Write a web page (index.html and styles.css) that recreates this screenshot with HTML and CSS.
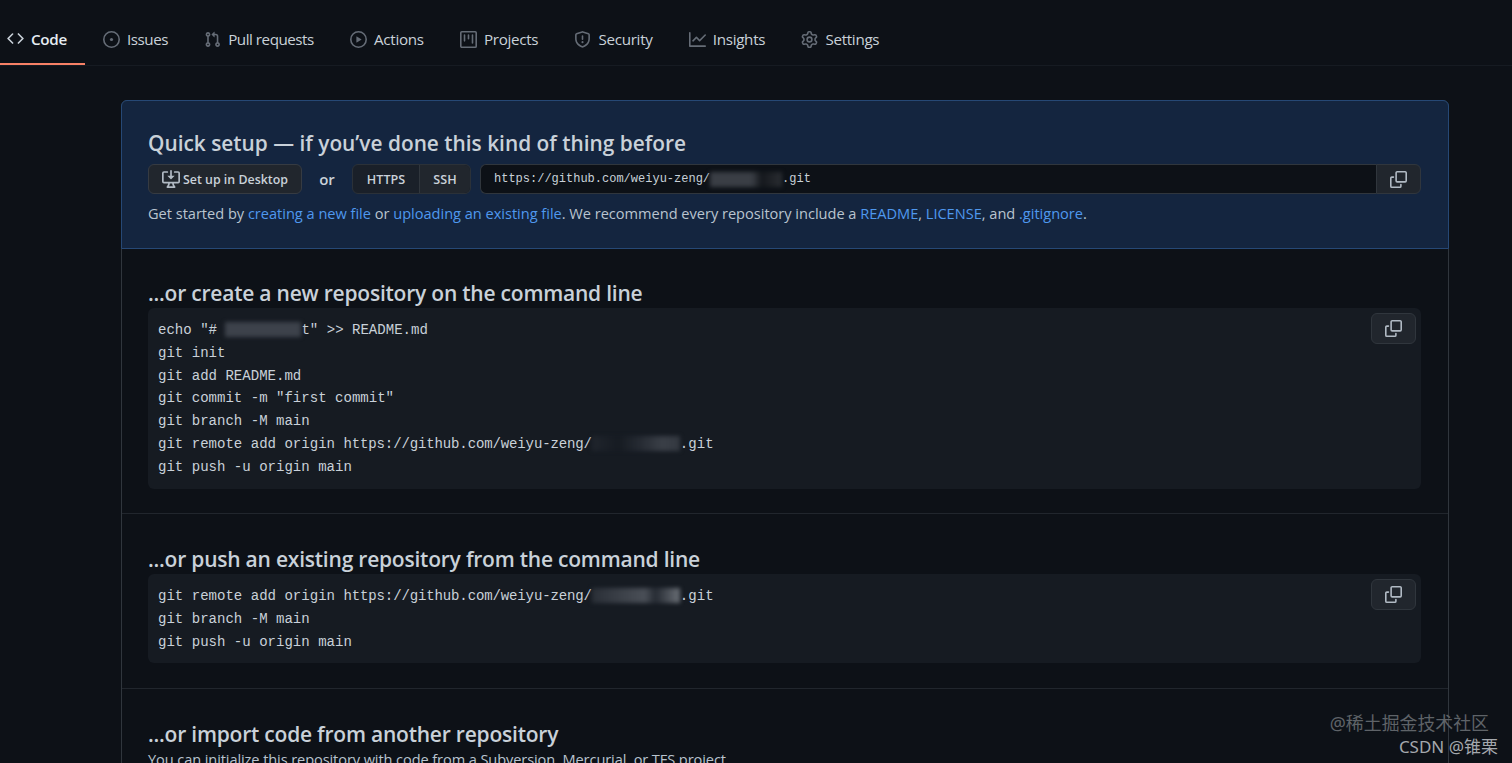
FILE: index.html
```html
<!DOCTYPE html>
<html lang="en">
<head>
<meta charset="utf-8">
<title>Quick setup</title>
<link rel="stylesheet" href="styles.css">
</head>
<body>
<svg class="defs" aria-hidden="true">
<symbol id="i-code" viewBox="0 0 16 16"><path d="M4.72 3.22a.75.75 0 011.06 1.06L2.06 8l3.72 3.72a.75.75 0 11-1.06 1.06L.47 8.53a.75.75 0 010-1.06l4.25-4.25zm6.56 0a.75.75 0 10-1.06 1.06L13.94 8l-3.72 3.72a.75.75 0 101.06 1.06l4.25-4.25a.75.75 0 000-1.06l-4.25-4.25z"/></symbol>
<symbol id="i-issue" viewBox="0 0 16 16"><path d="M8 9.5a1.5 1.5 0 100-3 1.5 1.5 0 000 3z"/><path fill-rule="evenodd" d="M8 0a8 8 0 100 16A8 8 0 008 0zM1.5 8a6.5 6.5 0 1113 0 6.5 6.5 0 01-13 0z"/></symbol>
<symbol id="i-pr" viewBox="0 0 16 16"><path fill-rule="evenodd" d="M7.177 3.073L9.573.677A.25.25 0 0110 .854v4.792a.25.25 0 01-.427.177L7.177 3.427a.25.25 0 010-.354zM3.75 2.5a.75.75 0 100 1.5.75.75 0 000-1.5zm-2.25.75a2.25 2.25 0 113 2.122v5.256a2.251 2.251 0 11-1.5 0V5.372A2.25 2.25 0 011.5 3.25zM11 2.5h-1V4h1a1 1 0 011 1v5.628a2.251 2.251 0 101.5 0V5A2.5 2.5 0 0011 2.5zm1 10.25a.75.75 0 111.5 0 .75.75 0 01-1.5 0zM3.75 12a.75.75 0 100 1.5.75.75 0 000-1.5z"/></symbol>
<symbol id="i-play" viewBox="0 0 16 16"><path fill-rule="evenodd" d="M1.5 8a6.5 6.5 0 1113 0 6.5 6.5 0 01-13 0zM8 0a8 8 0 100 16A8 8 0 008 0zM6.379 5.227A.25.25 0 006 5.442v5.117a.25.25 0 00.379.214l4.264-2.559a.25.25 0 000-.428L6.379 5.227z"/></symbol>
<symbol id="i-project" viewBox="0 0 16 16"><path fill-rule="evenodd" d="M1.75 0A1.75 1.75 0 000 1.75v12.5C0 15.216.784 16 1.75 16h12.5A1.75 1.75 0 0016 14.25V1.75A1.75 1.75 0 0014.25 0H1.75zM1.5 1.75a.25.25 0 01.25-.25h12.5a.25.25 0 01.25.25v12.5a.25.25 0 01-.25.25H1.75a.25.25 0 01-.25-.25V1.75zM11.75 3a.75.75 0 00-.75.75v7.5a.75.75 0 001.5 0v-7.5a.75.75 0 00-.75-.75zm-8.25.75a.75.75 0 011.5 0v5.5a.75.75 0 01-1.5 0v-5.5zM8 3a.75.75 0 00-.75.75v3.5a.75.75 0 001.5 0v-3.5A.75.75 0 008 3z"/></symbol>
<symbol id="i-shield" viewBox="0 0 16 16"><path fill-rule="evenodd" d="M7.467.133a1.75 1.75 0 011.066 0l5.25 1.68A1.75 1.75 0 0115 3.48V7c0 1.566-.32 3.182-1.303 4.682-.983 1.498-2.585 2.813-5.032 3.855a1.7 1.7 0 01-1.33 0c-2.447-1.042-4.049-2.357-5.032-3.855C1.32 10.182 1 8.566 1 7V3.48a1.75 1.75 0 011.217-1.667l5.25-1.68zm.61 1.429a.25.25 0 00-.153 0l-5.25 1.68a.25.25 0 00-.174.238V7c0 1.358.275 2.666 1.057 3.86.784 1.194 2.121 2.34 4.366 3.297a.2.2 0 00.154 0c2.245-.956 3.582-2.104 4.366-3.298C13.225 9.666 13.5 8.36 13.5 7V3.48a.25.25 0 00-.174-.237l-5.25-1.68zM9 10.5a1 1 0 11-2 0 1 1 0 012 0zm-.25-5.75a.75.75 0 10-1.5 0v3a.75.75 0 001.5 0v-3z"/></symbol>
<symbol id="i-graph" viewBox="0 0 16 16"><path fill-rule="evenodd" d="M1.5 1.75a.75.75 0 00-1.5 0v12.5c0 .414.336.75.75.75h14.5a.75.75 0 000-1.5H1.5V1.75zm14.28 2.53a.75.75 0 00-1.06-1.06L10 7.94 7.53 5.47a.75.75 0 00-1.06 0L3.22 8.72a.75.75 0 001.06 1.06L7 7.06l2.47 2.47a.75.75 0 001.06 0l5.25-5.25z"/></symbol>
<symbol id="i-gear" viewBox="0 0 16 16"><path fill-rule="evenodd" d="M7.429 1.525a6.593 6.593 0 011.142 0c.036.003.108.036.137.146l.289 1.105c.147.56.55.967.997 1.189.174.086.341.183.501.29.417.278.97.423 1.53.27l1.102-.303c.11-.03.175.016.195.046.219.31.41.641.573.989.014.031.022.11-.059.19l-.815.806c-.411.406-.562.957-.53 1.456a4.588 4.588 0 010 .582c-.032.499.119 1.05.53 1.456l.815.806c.08.08.073.159.059.19a6.494 6.494 0 01-.573.99c-.02.029-.086.074-.195.045l-1.103-.303c-.559-.153-1.112-.008-1.529.27-.16.107-.327.204-.5.29-.449.222-.851.628-.998 1.189l-.289 1.105c-.029.11-.101.143-.137.146a6.613 6.613 0 01-1.142 0c-.036-.003-.108-.037-.137-.146l-.289-1.105c-.147-.56-.55-.967-.997-1.189a4.502 4.502 0 01-.501-.29c-.417-.278-.97-.423-1.53-.27l-1.102.303c-.11.03-.175-.016-.195-.046a6.492 6.492 0 01-.573-.989c-.014-.031-.022-.11.059-.19l.815-.806c.411-.406.562-.957.53-1.456a4.587 4.587 0 010-.582c.032-.499-.119-1.05-.53-1.456l-.815-.806c-.08-.08-.073-.159-.059-.19a6.44 6.44 0 01.573-.99c.02-.029.086-.075.195-.045l1.103.303c.559.153 1.112.008 1.529-.27.16-.107.327-.204.5-.29.449-.222.851-.628.998-1.189l.289-1.105c.029-.11.101-.143.137-.146zM8 0c-.236 0-.47.01-.701.03-.743.065-1.29.615-1.458 1.261l-.29 1.106c-.017.066-.078.158-.211.224a5.994 5.994 0 00-.668.386c-.123.082-.233.09-.3.071L3.27 2.776c-.644-.177-1.392.02-1.82.63a7.977 7.977 0 00-.704 1.217c-.315.675-.111 1.422.363 1.891l.815.806c.05.048.098.147.088.294a6.084 6.084 0 000 .772c.01.147-.038.246-.088.294l-.815.806c-.474.469-.678 1.216-.363 1.891.2.428.436.835.704 1.218.428.609 1.176.806 1.82.63l1.103-.303c.066-.019.176-.011.299.071.213.143.436.272.668.386.133.066.194.158.212.224l.289 1.106c.169.646.715 1.196 1.458 1.26a8.094 8.094 0 001.402 0c.743-.064 1.29-.614 1.458-1.26l.29-1.106c.017-.066.078-.158.211-.224a5.98 5.98 0 00.668-.386c.123-.082.233-.09.3-.071l1.102.302c.644.177 1.392-.02 1.82-.63.268-.382.505-.789.704-1.217.315-.675.111-1.422-.364-1.891l-.814-.806c-.05-.048-.098-.147-.088-.294a6.1 6.1 0 000-.772c-.01-.147.039-.246.088-.294l.814-.806c.475-.469.679-1.216.364-1.891a7.992 7.992 0 00-.704-1.218c-.428-.609-1.176-.806-1.82-.63l-1.103.303c-.066.019-.176.011-.299-.071a5.991 5.991 0 00-.668-.386c-.133-.066-.194-.158-.212-.224L10.16 1.29C9.99.645 9.444.095 8.701.031A8.094 8.094 0 008 0zm1.5 8a1.5 1.5 0 11-3 0 1.5 1.5 0 013 0zM11 8a3 3 0 11-6 0 3 3 0 016 0z"/></symbol>
<symbol id="i-copy" viewBox="0 0 16 16"><path d="M0 6.75C0 5.784.784 5 1.75 5h1.5a.75.75 0 010 1.5h-1.5a.25.25 0 00-.25.25v7.5c0 .138.112.25.25.25h7.5a.25.25 0 00.25-.25v-1.5a.75.75 0 011.5 0v1.5A1.75 1.75 0 019.25 16h-7.5A1.75 1.75 0 010 14.25v-7.5z"/><path fill-rule="evenodd" d="M5 1.75C5 .784 5.784 0 6.75 0h7.5C15.216 0 16 .784 16 1.75v7.5A1.75 1.75 0 0114.25 11h-7.5A1.75 1.75 0 015 9.25v-7.5zm1.75-.25a.25.25 0 00-.25.25v7.5c0 .138.112.25.25.25h7.5a.25.25 0 00.25-.25v-7.5a.25.25 0 00-.25-.25h-7.5z"/></symbol>
<symbol id="i-desktop" viewBox="0 0 16 16"><path d="M4.927 5.427l2.896 2.896a.25.25 0 00.354 0l2.896-2.896A.25.25 0 0010.896 5H8.75V.75a.75.75 0 10-1.5 0V5H5.104a.25.25 0 00-.177.427z"/><path fill-rule="evenodd" d="M1.573 2.573a.25.25 0 00-.073.177v7.5a.25.25 0 00.25.25h12.5a.25.25 0 00.25-.25v-7.5a.25.25 0 00-.25-.25h-3a.75.75 0 110-1.5h3A1.75 1.75 0 0116 2.75v7.5A1.75 1.75 0 0114.25 12h-3.727c.099 1.041.52 1.872 1.292 2.757A.75.75 0 0111.25 16h-6.5a.75.75 0 01-.565-1.243c.772-.885 1.192-1.716 1.292-2.757H1.75A1.75 1.75 0 010 10.25v-7.5A1.75 1.75 0 011.75 1h3a.75.75 0 010 1.5h-3a.25.25 0 00-.177.073zM6.982 12a5.72 5.72 0 01-.765 2.5h3.566a5.72 5.72 0 01-.765-2.5H6.982z"/></symbol>
</svg>

<nav class="tabs">
  <a class="tab tab-active"><svg class="tab-icon code-icon"><use href="#i-code"/></svg>Code</a>
  <a class="tab tab-tight"><svg class="tab-icon"><use href="#i-issue"/></svg>Issues</a>
  <a class="tab tab-tight"><svg class="tab-icon"><use href="#i-pr"/></svg>Pull requests</a>
  <a class="tab"><svg class="tab-icon"><use href="#i-play"/></svg>Actions</a>
  <a class="tab"><svg class="tab-icon"><use href="#i-project"/></svg>Projects</a>
  <a class="tab"><svg class="tab-icon"><use href="#i-shield"/></svg>Security</a>
  <a class="tab"><svg class="tab-icon"><use href="#i-graph"/></svg>Insights</a>
  <a class="tab"><svg class="tab-icon"><use href="#i-gear"/></svg>Settings</a>
</nav>

<main class="box">
  <section class="quick">
    <h3 class="heading quick-heading">Quick setup — if you’ve done this kind of thing before</h3>
    <div class="clone-row">
      <button class="btn desktop-btn"><svg class="desktop-icon"><use href="#i-desktop"/></svg>Set up in Desktop</button>
      <span class="or">or</span>
      <div class="proto">
        <span class="proto-item proto-https">HTTPS</span>
        <span class="proto-item proto-ssh">SSH</span>
      </div>
      <div class="url-group">
        <div class="url">https://github.com/weiyu-zeng/<span class="redact redact-url"></span>.git</div>
        <button class="url-copy"><svg class="copy-icon"><use href="#i-copy"/></svg></button>
      </div>
    </div>
    <p class="hint">Get started by <a>creating a new file</a> or <a>uploading an existing file</a>. We recommend every repository include a <a>README</a>, <a>LICENSE</a>, and <a>.gitignore</a>.</p>
  </section>

  <section class="block block-create">
    <h3 class="heading">...or create a new repository on the command line</h3>
    <div class="code">
      <button class="code-copy"><svg class="copy-icon"><use href="#i-copy"/></svg></button>
      <div class="code-line">echo "# <span class="redact redact-echo"></span>t" &gt;&gt; README.md</div>
      <div class="code-line">git init</div>
      <div class="code-line">git add README.md</div>
      <div class="code-line">git commit -m "first commit"</div>
      <div class="code-line">git branch -M main</div>
      <div class="code-line">git remote add origin <span class="repo-url">https://github.com/weiyu-zeng/</span><span class="redact redact-remote"></span>.git</div>
      <div class="code-line">git push -u origin main</div>
    </div>
  </section>

  <section class="block block-push">
    <h3 class="heading">...or push an existing repository from the command line</h3>
    <div class="code">
      <button class="code-copy"><svg class="copy-icon"><use href="#i-copy"/></svg></button>
      <div class="code-line">git remote add origin <span class="repo-url">https://github.com/weiyu-zeng/</span><span class="redact redact-push"></span>.git</div>
      <div class="code-line">git branch -M main</div>
      <div class="code-line">git push -u origin main</div>
    </div>
  </section>

  <section class="block block-import">
    <h3 class="heading">...or import code from another repository</h3>
    <p class="import-text">You can initialize this repository with code from a Subversion, Mercurial, or TFS project.</p>
  </section>
</main>

<div class="watermark">
  <div class="wm-site">@稀土掘金技术社区</div>
  <div class="wm-user">CSDN @锥栗</div>
</div>
</body>
</html>
```

FILE: styles.css
```css
* { box-sizing: border-box; }
html, body { height: 763px; overflow: hidden; }
body {
  margin: 0;
  background: #0d1117;
  color: #c9d1d9;
  font-family: "Open Sans", "Noto Sans", sans-serif;
  position: relative;
}
.defs { display: none; }
svg { fill: currentColor; flex: none; }

.tabs {
  display: flex;
  height: 66px;
  border-bottom: 1px solid #161b22;
  padding-top: 14px;
}
.tab {
  display: flex;
  align-items: center;
  height: 51px;
  padding: 0 18.1px 1px;
  font-size: 15.2px;
  letter-spacing: -0.3px;
  color: #c9d1d9;
  white-space: nowrap;
}
.tab-tight { letter-spacing: -0.48px; }
.tab-active {
  padding-left: 7px;
  padding-bottom: 0;
  font-weight: 600;
  color: #e6edf3;
  border-bottom: 2px solid #f78166;
}
.tab-icon {
  width: 17px;
  height: 17px;
  margin-right: 7px;
  color: #656c76;
}
.code-icon { color: #c9d1d9; }

.box {
  margin: 34px 63px 0 121px;
  border: 1px solid #30363d;
  border-radius: 6px;
}
.heading {
  margin: 0;
  font-size: 21px;
  line-height: 28px;
  font-weight: 600;
  letter-spacing: -0.22px;
  color: #c9d1d9;
}
.quick-heading { font-size: 20.85px; letter-spacing: 0; }
.quick {
  height: 149px;
  padding: 28px 27px 0 26px;
  background: #14253f;
  margin: -1px -1px 0;
  border: 1px solid #264875;
  border-radius: 6px 6px 0 0;
}
.clone-row {
  display: flex;
  align-items: center;
  height: 30px;
  margin-top: 7px;
}
.btn {
  display: flex;
  align-items: center;
  width: 154px;
  height: 30px;
  padding: 0 0 0 13px;
  background: #21262d;
  border: 1px solid #363b42;
  border-radius: 6px;
  color: #c9d1d9;
  font: 600 12.4px "Open Sans", sans-serif;
}
.desktop-icon { width: 18px; height: 18px; margin-right: 3px; color: #b1bac4; }
.or { width: 50px; text-align: center; font-size: 15px; font-weight: 600; color: #c9d1d9; }
.proto {
  display: flex;
  height: 30px;
  background: #1a2029;
  border: 1px solid #2b3138;
  border-radius: 6px;
  margin-right: 9px;
}
.proto-item {
  display: flex;
  align-items: center;
  justify-content: center;
  font-size: 12.6px;
  font-weight: 600;
}
.proto-https { width: 66px; }
.proto-ssh {
  width: 51px;
  border-left: 1px solid #30363d;
  background: #21262d;
  border-radius: 0 6px 6px 0;
}
.url-group { display: flex; flex: 1; height: 30px; }
.url {
  flex: 1;
  display: flex;
  align-items: center;
  padding-left: 13px;
  background: #0d1117;
  border: 1px solid #30363d;
  border-right: 0;
  border-radius: 6px 0 0 6px;
  font: 12px "Liberation Mono", monospace;
  white-space: pre;
}
.url-copy {
  width: 45px;
  padding: 0;
  background: #21262d;
  border: 1px solid #30363d;
  border-radius: 0 6px 6px 0;
  color: #b1bac4;
}
.copy-icon { width: 17px; height: 17px; display: block; margin: 0 auto; }
.hint {
  margin: 8px 0 0;
  font-size: 14.6px;
  line-height: 22px;
  letter-spacing: -0.02px;
  color: #b9c4cf;
}
.hint a { color: #4f98ee; }

.block { padding: 31px 27px 0 26px; border-top: 1px solid #21262d; }
.block-create { height: 264px; padding-top: 30px; border-top: 0; }
.block-push { height: 175px; }
.code {
  position: relative;
  background: #161b22;
  border-radius: 6px;
  margin-top: 1px;
  padding: 11px 10px 10px;
}
.code-line {
  height: 22.8px;
  font: 14.05px/22.8px "Liberation Mono", monospace;
  white-space: pre;
  color: #c9d1d9;
}
.repo-url { letter-spacing: -0.15px; }
.code-copy {
  position: absolute;
  top: 5px;
  right: 5px;
  width: 45px;
  height: 31px;
  padding: 0;
  background: #21262d;
  border: 1px solid #30363d;
  border-radius: 6px;
  color: #b1bac4;
}
.redact {
  display: inline-block;
  height: 15px;
  vertical-align: -3px;
  filter: blur(2px);
}
.redact-url { width: 72px; background: linear-gradient(90deg, #3a3e45, #3a3e45 58%, #15181d 72%, #2a2d32 100%); }
.redact-echo { width: 76px; background: #3d424b; }
.redact-remote { width: 88px; background: linear-gradient(90deg, #20252d, #161b22 30%, #262b33 55%, #3a3f47 80%, #333840); }
.redact-push { width: 88px; background: linear-gradient(90deg, #2a2f37, #4a4f57 60%, #262b33 72%, #6a6f76); }
.import-text {
  margin: 0;
  font-size: 14.6px;
  line-height: 22px;
  letter-spacing: -0.1px;
  color: #b9c4cf;
}

.watermark {
  position: absolute;
  right: 14px;
  bottom: 5px;
  text-align: right;
  font-family: "Noto Sans", "Noto Sans CJK SC", sans-serif;
  line-height: 23px;
}
.wm-site { color: #5f6368; margin-right: 9px; font-size: 17.9px; }
.wm-user { color: #a4a8ad; font-size: 17px; }
```
